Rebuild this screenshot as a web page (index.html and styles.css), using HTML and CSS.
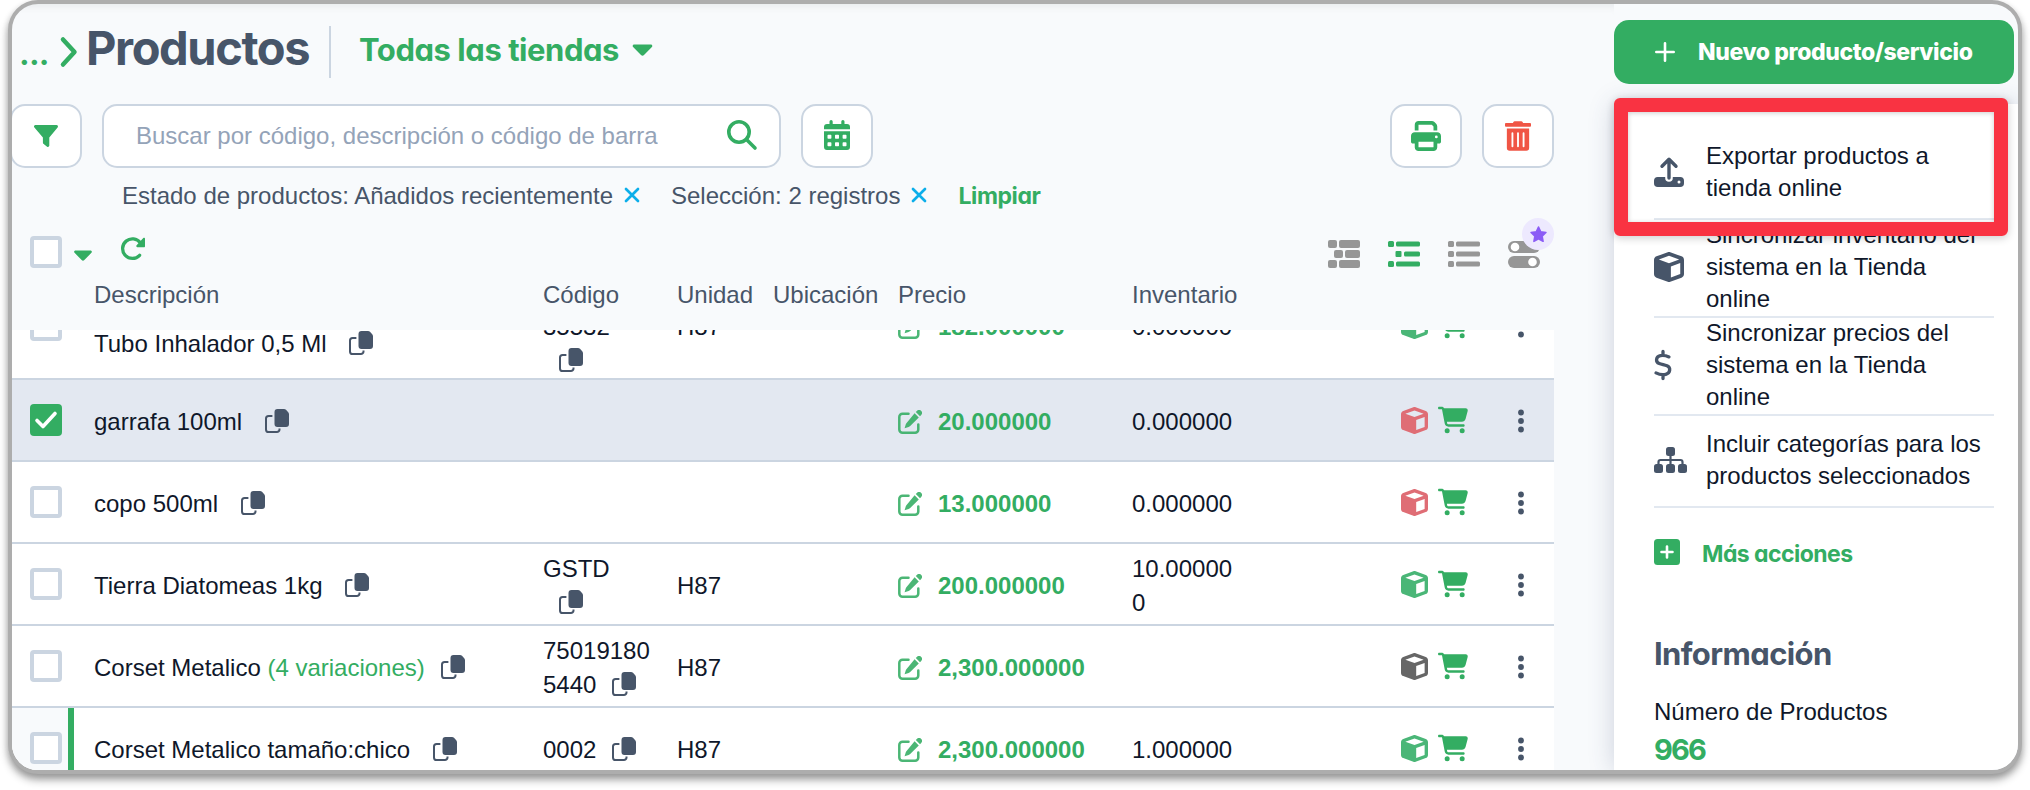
FILE: index.html
```html
<!DOCTYPE html>
<html lang="es">
<head>
<meta charset="utf-8">
<title>Productos</title>
<link rel="stylesheet" href="styles.css">
</head>
<body>
<svg class="sprite" aria-hidden="true">
  <symbol id="cart" viewBox="0 0 576 512"><path d="M0 24C0 10.7 10.7 0 24 0H69.5c22 0 41.5 12.8 50.6 32h411c26.3 0 45.5 25 38.6 50.4l-41 152.3c-8.5 31.4-37 53.3-69.5 53.3H170.7l5.4 28.5c2.2 11.3 12.1 19.5 23.6 19.5H488c13.3 0 24 10.7 24 24s-10.7 24-24 24H199.7c-34.6 0-64.3-24.6-70.7-58.5L77.4 54.5c-.7-3.8-4-6.5-7.9-6.5H24C10.7 48 0 37.3 0 24zM128 464a48 48 0 1 1 96 0 48 48 0 1 1 -96 0zm336-48a48 48 0 1 1 0 96 48 48 0 1 1 0-96z"/></symbol>
  <symbol id="cube" viewBox="0 0 512 512"><path d="M234.5 5.7c13.9-5 29.1-5 43.1 0l192 68.6C495 83.4 512 107.5 512 134.6V377.4c0 27-17 51.2-42.5 60.3l-192 68.6c-13.9 5-29.1 5-43.1 0l-192-68.6C17 428.6 0 404.5 0 377.4V134.6c0-27 17-51.2 42.5-60.3l192-68.6zM256 66L82.3 128 256 190l173.7-62L256 66zm32 368.6l160-57.1v-188L288 246.6v188z"/></symbol>
  <symbol id="copy" viewBox="0 0 24 24"><path d="M12.500 0h6.500a3 3 0 0 1 2 .8l2 2.200a3.500 3.500 0 0 1 1 2.300V15a3 3 0 0 1-3 3h-8.500a3 3 0 0 1-3-3V3a3 3 0 0 1 3-3z"/><path d="M7.400 7H3.600A2.600 2.600 0 0 0 1 9.600v10.800A2.600 2.600 0 0 0 3.600 23h8.300a2.600 2.600 0 0 0 2.600-2.600V19.600" fill="none" stroke="currentColor" stroke-width="2"/></symbol>
  <symbol id="edit" viewBox="0 0 24 24"><path d="M10.500 3.700H4.500A3.200 3.200 0 0 0 1.300 6.900v12.600a3.200 3.200 0 0 0 3.200 3.200h12.600a3.200 3.200 0 0 0 3.200-3.200v-5" fill="none" stroke="currentColor" stroke-width="2.500" stroke-linecap="round"/><path d="M16.600 3.300l4.200 4.200-8.600 8.600a4 4 0 0 1-1.600 1l-4 1.200 1.200-4a4 4 0 0 1 1-1.600zM17.800 2.100l1.300-1.300a2.700 2.700 0 0 1 3.900 0l.2.200a2.700 2.700 0 0 1 0 3.900L22 6.300z"/></symbol>
  <symbol id="dots" viewBox="0 0 6 24"><circle cx="3" cy="3.500" r="2.900"/><circle cx="3" cy="12" r="2.900"/><circle cx="3" cy="20.500" r="2.900"/></symbol>
  <symbol id="caret" viewBox="0 0 20 12"><path d="M1.800.5h16.400c1.500 0 2.100 1.500 1.200 2.500l-7.900 8a2.100 2.100 0 0 1-3 0L.6 3C-.4 2 .3.500 1.800.500z"/></symbol>
  <symbol id="close" viewBox="0 0 16 16"><path d="M2 2l12 12M14 2L2 14" fill="none" stroke="currentColor" stroke-width="2.700" stroke-linecap="round"/></symbol>
</svg>

<div class="window">
  <main class="main">
    <header class="title-bar">
      <span class="crumb">...</span>
      <svg class="chevron" viewBox="0 0 18 30"><path d="M3 2.500L14.500 15 3 27.500"/></svg>
      <h1 class="title">Productos</h1>
      <span class="divider"></span>
      <span class="store">Todas las tiendas</span>
      <svg class="store-caret"><use href="#caret"/></svg>
    </header>

    <div class="toolbar">
      <button class="tool"><svg class="i-filter" viewBox="0 0 24 22"><path d="M1.500 0h21c1.400 0 2 1.500 1.100 2.500L15.300 12.500v8c0 1.200-1.300 1.900-2.200 1.200l-3.400-2.600a2 2 0 0 1-.8-1.600v-5L.4 2.500C-.5 1.500.1 0 1.500 0z"/></svg></button>
      <div class="search">
        <span class="placeholder">Buscar por código, descripción o código de barras</span>
        <svg class="i-search" viewBox="0 0 30 30"><circle cx="12" cy="12" r="10.200"/><path d="M19.500 19.500L28 28"/></svg>
      </div>
      <button class="tool"><svg class="i-cal" viewBox="0 0 26 30"><path fill-rule="evenodd" d="M5.500 1.500a1.600 1.600 0 0 1 3.200 0V4h8.600V1.500a1.600 1.600 0 0 1 3.200 0V4H23a3 3 0 0 1 3 3v2.300H0V7a3 3 0 0 1 3-3h2.500zM0 11.200h26V27a3 3 0 0 1-3 3H3a3 3 0 0 1-3-3zm4.200 3.500a.7.700 0 0 0-.7.700v2.600c0 .4.300.7.700.7h2.500c.4 0 .7-.3.700-.7v-2.600a.7.700 0 0 0-.7-.7zm7.500 0a.7.700 0 0 0-.7.700v2.600c0 .4.300.7.700.7h2.600c.4 0 .7-.3.700-.7v-2.600a.7.700 0 0 0-.7-.7zm7.600 0a.7.700 0 0 0-.7.700v2.600c0 .4.300.7.700.7h2.500c.4 0 .7-.3.700-.7v-2.600a.7.700 0 0 0-.7-.7zM4.200 22.200a.7.700 0 0 0-.7.700v2.600c0 .4.300.7.700.7h2.500c.4 0 .7-.3.700-.7v-2.600a.7.700 0 0 0-.7-.7zm7.500 0a.7.700 0 0 0-.7.700v2.600c0 .4.300.7.700.7h2.600c.4 0 .7-.3.700-.7v-2.600a.7.700 0 0 0-.7-.7zm7.600 0a.7.700 0 0 0-.7.700v2.600c0 .4.300.7.700.7h2.500c.4 0 .7-.3.700-.7v-2.600a.7.700 0 0 0-.7-.7z"/></svg></button>
      <span class="spacer"></span>
      <button class="tool"><svg class="i-print" viewBox="0 0 512 512"><path d="M128 0C92.700 0 64 28.700 64 64v96h64V64H354.700L384 93.300V160h64V93.300c0-17-6.700-33.300-18.700-45.300L400 18.700C388 6.700 371.700 0 354.700 0H128zM384 352v32 64H128V384 368 352H384zm64 32h32c17.700 0 32-14.300 32-32V256c0-35.300-28.700-64-64-64H64c-35.300 0-64 28.700-64 64v96c0 17.700 14.300 32 32 32H64v64c0 35.300 28.700 64 64 64H384c35.300 0 64-28.700 64-64V384zM432 248a24 24 0 1 1 0 48 24 24 0 1 1 0-48z"/></svg></button>
      <button class="tool"><svg class="i-trash" viewBox="0 0 448 512"><path d="M32 464a48 48 0 0 0 48 48h288a48 48 0 0 0 48-48V128H32zm272-256a16 16 0 0 1 32 0v224a16 16 0 0 1-32 0zm-96 0a16 16 0 0 1 32 0v224a16 16 0 0 1-32 0zm-96 0a16 16 0 0 1 32 0v224a16 16 0 0 1-32 0zM432 32H312l-9.400-18.700A24 24 0 0 0 281.100 0H166.800a23.720 23.720 0 0 0-21.400 13.300L136 32H16A16 16 0 0 0 0 48v32a16 16 0 0 0 16 16h416a16 16 0 0 0 16-16V48a16 16 0 0 0-16-16z"/></svg></button>
    </div>

    <div class="filters">
      <span>Estado de productos: Añadidos recientemente</span><svg class="i-close"><use href="#close"/></svg>
      <span class="selection">Selección: 2 registros</span><svg class="i-close"><use href="#close"/></svg>
      <a class="clear">Limpiar</a>
    </div>

    <div class="list-tools">
      <span class="check"></span>
      <svg class="all-caret"><use href="#caret"/></svg>
      <svg class="i-refresh" viewBox="0 0 24 24"><path d="M18.600 18.300A9.800 9.800 0 1 1 19.300 5.800" fill="none" stroke="currentColor" stroke-width="3.300" stroke-linecap="round"/><path d="M24 1.800v7.400c0 .6-.4 1-1 1h-6.600c-1 0-1.500-1.200-.8-1.900L22.300 1.100c.7-.7 1.700-.3 1.700.7z"/></svg>
      <span class="spacer"></span>
      <div class="views">
        <svg class="view" viewBox="0 0 32 28"><rect width="9" height="8" rx="2"/><rect x="11" width="21" height="8" rx="2"/><rect x="6" y="10" width="9" height="8" rx="2"/><rect x="17" y="10" width="15" height="8" rx="2"/><rect y="20" width="9" height="8" rx="2"/><rect x="11" y="20" width="21" height="8" rx="2"/></svg>
        <svg class="view active" viewBox="0 0 32 28"><rect y="1" width="6" height="6" rx="1.500"/><rect x="8" y="1.500" width="24" height="5" rx="1.500"/><rect x="7.500" y="11" width="6" height="6" rx="1"/><rect x="16" y="11.500" width="16" height="5" rx="1.500"/><rect y="21" width="6" height="6" rx="1.500"/><rect x="8" y="21.500" width="24" height="5" rx="1.500"/></svg>
        <svg class="view" viewBox="0 0 32 28"><rect y="1" width="6" height="6" rx="1.500"/><rect x="8" y="1.500" width="24" height="5" rx="1.500"/><rect y="11" width="6" height="6" rx="1.500"/><rect x="8" y="11.500" width="24" height="5" rx="1.500"/><rect y="21" width="6" height="6" rx="1.500"/><rect x="8" y="21.500" width="24" height="5" rx="1.500"/></svg>
        <div class="columns">
          <svg class="view" viewBox="0 0 32 28"><rect y="1" width="32" height="12" rx="6"/><circle class="knob" cx="7" cy="7" r="4.300"/><rect y="16" width="32" height="12" rx="6"/><circle class="knob" cx="24.500" cy="22" r="4.300"/></svg>
          <span class="badge"><svg viewBox="0 0 16 16"><path d="M8 1l2.100 4.500 4.900.600-3.600 3.400.9 4.900L8 12l-4.300 2.400.9-4.900L1 6.100l4.900-.600z"/></svg></span>
        </div>
      </div>
    </div>

    <div class="cols head">
      <span></span><span>Descripción</span><span>Código</span><span>Unidad</span><span>Ubicación</span><span>Precio</span><span>Inventario</span>
    </div>

    <div class="rows">
      <div class="cols row tall">
        <span class="pick"><i class="check"></i></span>
        <span class="desc">Tubo Inhalador 0,5 Ml <svg class="copy"><use href="#copy"/></svg></span>
        <span class="code">35532<br><svg class="copy"><use href="#copy"/></svg></span>
        <span>H87</span><span></span>
        <span class="price"><svg class="edit"><use href="#edit"/></svg>182.000000</span>
        <span>0.000000</span>
        <span class="acts"><svg class="cube green"><use href="#cube"/></svg><svg class="cart"><use href="#cart"/></svg><svg class="dots"><use href="#dots"/></svg></span>
      </div>
      <div class="cols row selected">
        <span class="pick"><i class="check on"><svg viewBox="0 0 22 18"><path d="M2 9.500L8 15.500 20 2.500"/></svg></i></span>
        <span>garrafa 100ml <svg class="copy"><use href="#copy"/></svg></span>
        <span></span><span></span><span></span>
        <span class="price"><svg class="edit"><use href="#edit"/></svg>20.000000</span>
        <span>0.000000</span>
        <span class="acts"><svg class="cube red"><use href="#cube"/></svg><svg class="cart"><use href="#cart"/></svg><svg class="dots"><use href="#dots"/></svg></span>
      </div>
      <div class="cols row">
        <span class="pick"><i class="check"></i></span>
        <span>copo 500ml <svg class="copy"><use href="#copy"/></svg></span>
        <span></span><span></span><span></span>
        <span class="price"><svg class="edit"><use href="#edit"/></svg>13.000000</span>
        <span>0.000000</span>
        <span class="acts"><svg class="cube red"><use href="#cube"/></svg><svg class="cart"><use href="#cart"/></svg><svg class="dots"><use href="#dots"/></svg></span>
      </div>
      <div class="cols row">
        <span class="pick"><i class="check"></i></span>
        <span>Tierra Diatomeas 1kg <svg class="copy"><use href="#copy"/></svg></span>
        <span>GSTD<br><svg class="copy"><use href="#copy"/></svg></span>
        <span>H87</span><span></span>
        <span class="price"><svg class="edit"><use href="#edit"/></svg>200.000000</span>
        <span>10.00000<br>0</span>
        <span class="acts"><svg class="cube green"><use href="#cube"/></svg><svg class="cart"><use href="#cart"/></svg><svg class="dots"><use href="#dots"/></svg></span>
      </div>
      <div class="cols row">
        <span class="pick"><i class="check"></i></span>
        <span>Corset Metalico <em>(4 variaciones)</em><svg class="copy"><use href="#copy"/></svg></span>
        <span>75019180<br>5440<svg class="copy"><use href="#copy"/></svg></span>
        <span>H87</span><span></span>
        <span class="price"><svg class="edit"><use href="#edit"/></svg>2,300.000000</span>
        <span></span>
        <span class="acts"><svg class="cube gray"><use href="#cube"/></svg><svg class="cart"><use href="#cart"/></svg><svg class="dots"><use href="#dots"/></svg></span>
      </div>
      <div class="cols row">
        <span class="pick variant"><i class="check"></i></span>
        <span>Corset Metalico tamaño:chico <svg class="copy"><use href="#copy"/></svg></span>
        <span>0002<svg class="copy"><use href="#copy"/></svg></span>
        <span>H87</span><span></span>
        <span class="price"><svg class="edit"><use href="#edit"/></svg>2,300.000000</span>
        <span>1.000000</span>
        <span class="acts"><svg class="cube green"><use href="#cube"/></svg><svg class="cart"><use href="#cart"/></svg><svg class="dots"><use href="#dots"/></svg></span>
      </div>
    </div>
  </main>

  <aside class="side">
    <button class="new"><svg viewBox="0 0 20 20"><path d="M10 1.300v17.400M1.300 10h17.400"/></svg><span>Nuevo producto/servicio</span></button>
    <div class="panel">
      <ul class="actions">
        <li><svg class="a-icon w30" viewBox="0 0 30 30"><path d="M15 21V3M8 9.200L15 2.200l7 7" fill="none" stroke="currentColor" stroke-width="3.400" stroke-linecap="round" stroke-linejoin="round"/><path fill-rule="evenodd" d="M3.800 20h7.400v1a3.800 3.800 0 0 0 7.600 0v-1h7.400A3.800 3.800 0 0 1 30 23.800v2.400a3.800 3.800 0 0 1-3.800 3.800H3.800A3.800 3.800 0 0 1 0 26.200v-2.400A3.800 3.800 0 0 1 3.800 20zM25 23.500a1.500 1.500 0 1 0 0 3 1.500 1.500 0 0 0 0-3z"/></svg><span>Exportar productos a<br>tienda online</span></li>
        <li><svg class="a-icon w30"><use href="#cube"/></svg><span>Sincronizar inventario del<br>sistema en la Tienda<br>online</span></li>
        <li><svg class="a-icon dollar" viewBox="0 0 18 30"><path d="M9 1.500V5M9 25v3.500M15 6.900C12 5.500 9 5 6.400 5.600 1.700 6.600 1.300 12 5.200 13.500c2.500 1 5.300 1.300 7.800 2.300 4.200 1.800 3.300 7.200-1.200 8.500-3.200.9-6.900.1-9.800-1.400" fill="none" stroke="currentColor" stroke-width="3.300" stroke-linecap="round"/></svg><span>Sincronizar precios del<br>sistema en la Tienda<br>online</span></li>
        <li><svg class="a-icon sitemap" viewBox="0 0 33 26"><rect x="12" width="9" height="9" rx="2.500"/><rect y="17" width="9" height="9" rx="2.500"/><rect x="12" y="17" width="9" height="9" rx="2.500"/><rect x="24" y="17" width="9" height="9" rx="2.500"/><path d="M16.500 8v10M4.500 18v-3a2 2 0 0 1 2-2h20a2 2 0 0 1 2 2v3" fill="none" stroke="currentColor" stroke-width="2.200"/></svg><span>Incluir categorías para los<br>productos seleccionados</span></li>
      </ul>
      <div class="more"><svg viewBox="0 0 26 26"><rect width="26" height="26" rx="3.500"/><path d="M13 7.500v11M7.500 13h11"/></svg><span>Más acciones</span></div>
      <h2 class="info">Información</h2>
      <div class="count-label">Número de Productos</div>
      <div class="count">966</div>
    </div>
    <div class="highlight"></div>
  </aside>
</div>
</body>
</html>
```
FILE: styles.css
```css
* { box-sizing: border-box; }
body {
  margin: 0;
  height: 790px;
  overflow: hidden;
  background: #fff;
  font: 24px/34px "Liberation Sans", Arial, sans-serif;
  color: #0f172a;
}
.sprite { display: none; }
svg { fill: currentColor; flex: none; overflow: visible; }
button { border: 0; padding: 0; font: inherit; }
h1, h2, ul { margin: 0; padding: 0; list-style: none; }

.window {
  display: flex;
  width: 2014px;
  height: 774px;
  margin: 0 8px;
  border: 4px solid #adadad;
  border-radius: 30px;
  background: #f8fafc;
  overflow: hidden;
  box-shadow: 0 6px 8px rgba(0, 0, 0, .32), 0 3px 6px rgba(0, 0, 0, .15);
}
.main {
  width: 1602px;
  flex: none;
  display: flex;
  flex-direction: column;
  box-shadow: inset 0 9px 9px -7px rgba(15, 23, 42, .08);
}

.title-bar, .crumb, .title, .store, .clear, .new, .more, .info, .count {
  font-family: Inter, "Open Sans", sans-serif;
  font-weight: 700;
  font-feature-settings: "cv11", "calt" 0;
  white-space: nowrap;
}
.title-bar {
  display: flex;
  align-items: center;
  height: 88px;
  padding: 0 0 8px 7px;
  flex: none;
  color: #33ad62;
}
.crumb { width: 41px; margin-top: 20px; font-size: 32px; letter-spacing: -.8px; }
.chevron { width: 18px; height: 30px; margin-top: 16px; fill: none; stroke: currentColor; stroke-width: 4.5; stroke-linecap: round; stroke-linejoin: round; }
.title { width: 240px; margin: 8px 0 0 8px; font-size: 47px; line-height: 60px; letter-spacing: -1.4px; color: #475569; }
.divider { width: 2px; height: 52px; margin: 16px 28px 0 3px; background: #cbd5e1; }
.store { width: 260px; margin-top: 11px; font-size: 31px; letter-spacing: -.45px; }
.store-caret { width: 21px; height: 12px; margin: 11px 0 0 13px; }

.toolbar { display: flex; height: 64px; margin: 12px 60px 0 -2px; gap: 20px; flex: none; }
.tool, .search {
  display: flex;
  align-items: center;
  justify-content: center;
  width: 72px;
  border: 2px solid #cbd5e1;
  border-radius: 15px;
  background: #fff;
  color: #33ad62;
}
.search { width: 679px; justify-content: space-between; padding: 0 22px 0 32px; }
.placeholder { width: 522px; overflow: hidden; white-space: nowrap; color: #94a3b8; }
.spacer { flex: 1; }
.i-filter { width: 24px; height: 22px; }
.i-search { width: 30px; height: 30px; margin-top: -2px; fill: none; stroke: currentColor; stroke-width: 3.6; stroke-linecap: round; }
.i-cal { width: 26px; height: 30px; margin-top: -2px; }
.i-print { width: 30px; height: 30px; }
.i-trash { width: 26px; height: 30px; color: #f05545; }

.filters { display: flex; align-items: center; height: 34px; margin: 11px 0 0 110px; flex: none; color: #475569; white-space: nowrap; }
.i-close { width: 16px; height: 16px; margin: -2px 0 0 11px; color: #0caeea; }
.selection { margin-left: 31px; }
.clear { margin-left: 31px; color: #33ad62; font-size: 23px; letter-spacing: -.4px; }

.list-tools { display: flex; align-items: flex-start; height: 36px; margin: 23px 60px 0 18px; flex: none; color: #33ad62; }
.check { display: block; width: 32px; height: 32px; border: 4px solid #cbd5e1; border-radius: 4px; background: #fff; }
.check.on { display: flex; align-items: center; justify-content: center; border: 0; background: #33ad62; }
.check.on svg { width: 22px; height: 18px; fill: none; stroke: #fff; stroke-width: 3.6; stroke-linecap: round; stroke-linejoin: round; }
.all-caret { width: 18px; height: 11px; margin: 14px 0 0 12px; }
.i-refresh { width: 24px; height: 24px; margin: 1px 0 0 29px; }
.views { display: flex; gap: 28px; margin: 4px 14px 0 0; color: #969696; }
.view { display: block; width: 32px; height: 28px; }
.view.active { color: #33ad62; }
.columns { position: relative; }
.knob { fill: #fff; }
.badge { position: absolute; left: 14px; top: -22px; display: flex; align-items: center; justify-content: center; width: 32px; height: 32px; border-radius: 50%; background: #ede9fe; }
.badge svg { width: 17px; height: 17px; color: #8b5cf6; stroke: currentColor; stroke-width: 1.5; stroke-linejoin: round; }

.cols {
  display: grid;
  grid-template-columns: 82px 449px 134px 96px 125px 234px 269px 153px;
  width: 1542px;
  align-items: center;
  white-space: nowrap;
}
.head { height: 58px; padding-bottom: 12px; flex: none; color: #475569; }
.rows { flex: 1; overflow: hidden; background: #fff; width: 1542px; }
.row { height: 82px; border-bottom: 2px solid #cbd5e1; }
.row > span { padding-top: 3px; }
.row.selected { background: #e3e8f1; }
.row.tall { height: 108px; margin-top: -58px; }
.row .desc { padding-top: 37px; }
.row .code { padding-top: 37px; }
.row > .pick { display: flex; align-items: center; align-self: stretch; padding: 0 0 0 18px; }
.pick.variant { width: 62px; background: #f8fafc; border-right: 6px solid #33ad62; }
.copy { width: 24px; height: 24px; margin: 0 0 -3px 16px; color: #475569; }
em { font-style: normal; color: #33ad62; }
.price { display: flex; align-items: center; font-weight: 700; color: #33ad62; }
.edit { width: 24px; height: 24px; margin: 0 16px 0 0; opacity: .88; }
.row > .acts { display: flex; align-items: center; padding: 0; }
.cube { width: 27px; height: 27px; }
.cube.green { color: #4ab677; }
.cube.red { color: #df6d75; }
.cube.gray { color: #666; }
.cart { width: 30px; height: 28px; margin-left: 10px; color: #33ad62; }
.dots { width: 6px; height: 24px; margin: 2px 0 0 50px; color: #475569; }

.side { position: relative; width: 404px; flex: none; }
.new { position: relative; z-index: 1; display: flex; align-items: center; width: 400px; height: 64px; margin-top: 16px; padding-left: 41px; border-radius: 15px; background: #33ad62; color: #fff; }
.new svg { width: 20px; height: 20px; fill: none; stroke: currentColor; stroke-width: 2.6; stroke-linecap: round; }
.new span { margin-left: 23px; font-size: 23px; font-weight: 800; letter-spacing: -.4px; }
.panel { height: 666px; margin-top: 20px; padding: 24px 24px 0 40px; background: #fff; box-shadow: 0 0 24px rgba(51, 65, 110, .22); }
.actions li { display: flex; align-items: center; height: 98px; padding-bottom: 2px; border-bottom: 2px solid #e2e8f0; line-height: 32px; white-space: nowrap; }
.actions li:first-child, .actions li:last-child { height: 92px; }
.actions span { margin-left: auto; width: 288px; }
.a-icon { color: #475569; }
.w30 { width: 30px; height: 30px; }
.dollar { width: 18px; height: 30px; }
.sitemap { width: 33px; height: 26px; }
.more { display: flex; align-items: center; margin-top: 25px; color: #33ad62; font-size: 23px; letter-spacing: -.55px; }
.more svg { width: 26px; height: 26px; }
.more path { fill: none; stroke: #fff; stroke-width: 2.6; stroke-linecap: round; }
.more span { margin-left: 22px; padding-top: 4px; }
.info { margin-top: 63px; font-size: 31px; line-height: 40px; letter-spacing: -.6px; color: #475569; }
.count-label { margin-top: 21px; }
.count { margin-top: 4px; font-size: 29px; color: #33ad62; letter-spacing: -1.8px; }
.highlight { position: absolute; z-index: 2; left: 0; top: 94px; width: 394px; height: 138px; border: 14px solid #f93342; border-radius: 6px; box-shadow: 0 2px 8px rgba(0, 0, 0, .2), inset 0 1px 5px rgba(0, 0, 0, .2); }
```
